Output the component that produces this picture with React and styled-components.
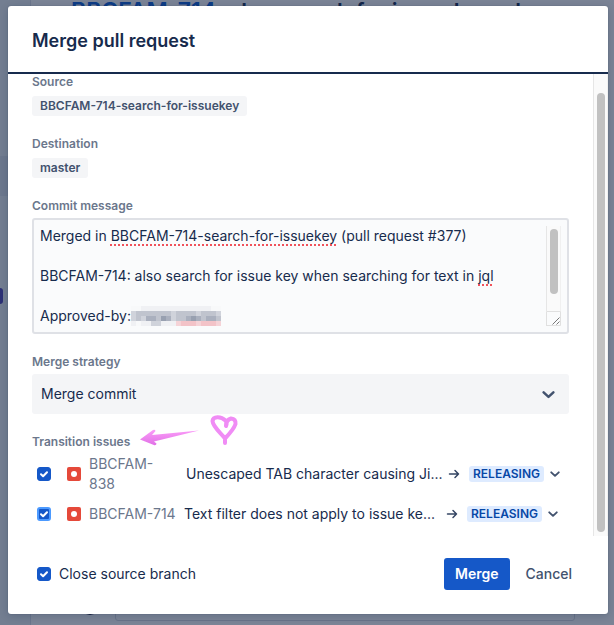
import React from 'react'
import styled, { createGlobalStyle } from 'styled-components';

const GlobalStyle = createGlobalStyle`
    * {
        box-sizing: border-box;
    }

    body {
        margin: 0;
        background: #737e91;
        color: #172b4d;
        font-family: Inter, Roboto, sans-serif;
        font-size: 14px;
        line-height: 20px;
    }

    button, textarea, select, input {
        font: inherit;
        color: inherit;
        margin: 0;
    }
`;

const Screen = styled.div`
    position: relative;
    display: flex;
    min-height: 100vh;
    padding: 6px 6px 11px 8px;
    overflow: hidden;
`;

const Backdrop = styled.div`
    position: absolute;
    inset: 0;
    padding: 0 0 0 30px;
    overflow: hidden;
`;

const BackPanel = styled.div`
    height: 100%;
    padding-left: 40px;
    border-left: 1px solid #6b768c;
    background: #7b8496;
`;

const BackTitle = styled.div`
    font-size: 22px;
    font-weight: 600;
    line-height: 22px;
    white-space: nowrap;
    color: #12264a;

    span {
        font-size: 23px;
        color: #0d3c85;
    }
`;

const BackBox = styled.div`
    position: absolute;
    left: 115px;
    right: 39px;
    bottom: 4px;
    height: 40px;
    border: 1px solid #697489;
    border-radius: 3px;
`;

const BackAvatar = styled.div`
    position: absolute;
    left: 80px;
    bottom: 10px;
    width: 20px;
    height: 20px;
    border-radius: 50%;
    background: #17213f;
`;

const BackBand = styled.div`
    position: absolute;
    left: 0;
    top: 156px;
    width: 30px;
    height: 40px;
    background: #6c788d;
`;

const BackTab = styled.div`
    position: absolute;
    left: -3px;
    top: 288px;
    width: 6px;
    height: 16px;
    border-radius: 3px;
    background: #2b3075;
`;

const Dialog = styled.section`
    position: relative;
    flex: 1;
    min-width: 0;
    display: flex;
    flex-direction: column;
    border-radius: 3px;
    background: #fff;
    box-shadow: 0 0 1px rgba(9, 30, 66, 0.4), 0 2px 8px rgba(9, 30, 66, 0.2);
`;

const Header = styled.header`
    padding: 23px 24px 19px;
    border-bottom: 2px solid #172b4d;
`;

const Title = styled.h1`
    margin: 0;
    font-size: 18px;
    font-weight: 600;
    line-height: 24px;
`;

const Body = styled.div`
    flex: 1;
    display: flex;
`;

const Fields = styled.div`
    flex: 1;
    min-width: 0;
    display: flex;
    flex-direction: column;
    gap: 20px;
    padding: 0 24px 2px;
`;

const Field = styled.div`
    display: flex;
    flex-direction: column;
    align-items: stretch;
    gap: ${props => props.$gap || 4}px;
`;

const Label = styled.label`
    align-self: flex-start;
    font-size: 12px;
    font-weight: 600;
    line-height: 16px;
    color: #6b778c;
`;

const Tag = styled.span`
    align-self: flex-start;
    padding: 0 8px;
    border-radius: 3px;
    background: #f4f5f7;
    font-size: 12px;
    font-weight: 600;
    color: #42526e;
`;

const ScrollTrack = styled.div`
    width: 15px;
    padding: ${props => props.$pad};
    border-left: 1px solid #e6e6e6;
    border-right: 1px solid #f0f0f0;
    background: #fafafa;
`;

const ScrollThumb = styled.div`
    width: 8px;
    height: ${props => props.$height};
    margin: 0 auto;
    border-radius: 4px;
    background: #c1c1c1;
`;

const Editor = styled.div`
    position: relative;
    display: flex;
    padding: 6px;
    border: 2px solid #dfe1e6;
    border-radius: 3px;
    background: #fafbfc;
`;

const Message = styled.textarea`
    position: relative;
    flex: 1;
    min-width: 0;
    display: block;
    height: 100px;
    padding: 0;
    border: 0;
    outline: 0;
    background: transparent;
    resize: none;
    overflow: hidden;
`;

const SpellLayer = styled.div`
    position: absolute;
    inset: 6px 21px 6px 6px;
    overflow: hidden;
    white-space: pre-wrap;
    color: transparent;

    mark {
        background: none;
        color: transparent;
        text-decoration: underline dotted #f0525b 2px;
        text-underline-offset: 3px;
        text-decoration-skip-ink: none;
    }

    svg {
        vertical-align: top;
    }
`;

const EditorSide = styled.div`
    display: flex;
    flex-direction: column;

    svg {
        display: block;
    }
`;

const SelectBox = styled.div`
    display: grid;
    align-items: center;

    select, svg {
        grid-area: 1 / 1;
    }

    svg {
        justify-self: end;
        margin-right: 14px;
        pointer-events: none;
    }
`;

const Select = styled.select`
    width: 100%;
    height: 40px;
    padding: 0 40px 0 9px;
    border: 0;
    border-radius: 3px;
    background: #f4f5f7;
    appearance: none;
`;

const Issues = styled.ul`
    margin: 0;
    padding: 0;
    list-style: none;
`;

const Issue = styled.li`
    display: flex;
    align-items: center;
    height: 40px;
    padding: 0 ${props => props.$end}px 0 5px;
`;

const CheckBox = styled.span`
    display: grid;
    flex: none;

    input, svg {
        grid-area: 1 / 1;
    }

    input {
        width: 14px;
        height: 14px;
        border: ${props => (props.$focused ? '2px solid #4c9aff' : '1px solid #1558c8')};
        border-radius: 3px;
        background: #1558c8;
        appearance: none;
    }

    svg {
        pointer-events: none;
        visibility: hidden;
    }

    input:checked + svg {
        visibility: visible;
    }
`;

const IssueType = styled.svg`
    flex: none;
    margin: 0 8px 0 16px;
`;

const IssueKey = styled.a`
    flex: none;
    width: ${props => props.$width}px;
    padding-right: ${props => (props.$wrap ? 16 : 0)}px;
    margin-right: 8px;
    white-space: ${props => (props.$wrap ? 'normal' : 'nowrap')};
    color: #6b778c;
    text-decoration: none;
`;

const Summary = styled.span`
    flex: 1;
    min-width: 0;
    overflow: hidden;
    white-space: nowrap;
`;

const Status = styled.button`
    flex: none;
    display: flex;
    align-items: center;
    padding: 0;
    border: 0;
    background: none;
`;

const Lozenge = styled.span`
    margin: 0 6px 0 9px;
    padding: 0 4px;
    border-radius: 3px;
    background: #deebff;
    color: #0747a6;
    font-size: 12px;
    font-weight: 600;
    line-height: 16px;
`;

const Doodle = styled.svg`
    position: absolute;
    left: 130px;
    top: 406px;
    pointer-events: none;
`;

const Footer = styled.footer`
    display: flex;
    align-items: center;
    justify-content: space-between;
    padding: 22px 26px 24px 29px;
`;

const CloseBranch = styled.label`
    display: flex;
    align-items: center;
    gap: 8px;
`;

const Actions = styled.div`
    display: flex;
    gap: 6px;
`;

const Button = styled.button`
    height: 32px;
    padding: 0 ${props => (props.$primary ? 11 : 10)}px;
    border: 0;
    border-radius: 3px;
    background: ${props => (props.$primary ? '#1558c8' : 'transparent')};
    color: ${props => (props.$primary ? '#fff' : '#42526e')};
    font-weight: ${props => (props.$primary ? 600 : 500)};
`;

const message = `Merged in BBCFAM-714-search-for-issuekey (pull request #377)

BBCFAM-714: also search for issue key when searching for text in jql

Approved-by:
`;

const issues = [
    { key: 'BBCFAM-838', summary: 'Unescaped TAB character causing Ji...', keyWidth: 89, end: 9, wrap: true },
    { key: 'BBCFAM-714', summary: 'Text filter does not apply to issue ke...', keyWidth: 87, end: 11, focused: true },
];

// one string per row of blocks, each digit is a shade
const blocks = ['001111111111111100', '233333332333323332', '232443542334543443', '101122111566656665'];
const shades = ['#f8f9fa', '#f0f1f4', '#d0d3db', '#c0c4ce', '#aab0be', '#98a0b0', '#f3c3c8'];

const Chevron = ({ size = 12 }) => (
    <svg width={size} height={size} viewBox="0 0 12 12" fill="none" stroke="#42526e" strokeWidth="2.3" strokeLinecap="round" strokeLinejoin="round">
        <path d="M1.5 4 6 8.2 10.5 4" />
    </svg>
);

const Check = ({ focused, ...rest }) => (
    <CheckBox $focused={focused}>
        <input type="checkbox" defaultChecked {...rest} />
        <svg width="14" height="14" viewBox="0 0 14 14" fill="none" stroke="#fff" strokeWidth="2" strokeLinecap="round" strokeLinejoin="round">
            <path d="M4 7.2 6.1 9.2 10 5.2" />
        </svg>
    </CheckBox>
);

const Censored = () => (
    <svg width="90" height="20" viewBox="0 0 90 20" shapeRendering="crispEdges">
        {blocks.map((row, y) => row.split('').map((shade, x) => (
            <rect key={`${x}-${y}`} x={x * 5} y={y * 5} width="5" height="5" fill={y === 3 && shade === '5' ? '#f5d3d7' : shades[shade]} />
        )))}
    </svg>
);

export default class App extends React.Component {

    renderBackdrop = () => {
        return <Backdrop aria-hidden="true">
            <BackPanel>
                <BackTitle><span>BBCFAM-714</span>: also search for issue key when</BackTitle>
            </BackPanel>
            <BackBand />
            <BackTab />
            <BackAvatar />
            <BackBox />
        </Backdrop>
    };

    renderIssue = (issue) => {
        return <Issue key={issue.key} $end={issue.end}>
            <Check focused={issue.focused} aria-label={issue.key} />
            <IssueType width="14" height="14" viewBox="0 0 14 14">
                <rect width="14" height="14" rx="2" fill="#e5493a" />
                <circle cx="7" cy="7" r="3" fill="#fff" />
            </IssueType>
            <IssueKey href="#" $width={issue.keyWidth} $wrap={issue.wrap}>{issue.key}</IssueKey>
            <Summary>{issue.summary}</Summary>
            <Status type="button">
                <svg width="12" height="12" viewBox="0 0 12 12" fill="none" stroke="#344563" strokeWidth="1.5" strokeLinecap="round" strokeLinejoin="round">
                    <path d="M1.5 6H10.5M7 2.5 10.5 6 7 9.5" />
                </svg>
                <Lozenge>RELEASING</Lozenge>
                <Chevron size={10} />
            </Status>
        </Issue>
    };

    render() {
        return (
            <Screen>
                <GlobalStyle />
                {this.renderBackdrop()}
                <Dialog role="dialog" aria-labelledby="title">
                    <Header>
                        <Title id="title">Merge pull request</Title>
                    </Header>
                    <Body>
                        <Fields>
                            <Field $gap={6}>
                                <Label as="span">Source</Label>
                                <Tag>BBCFAM-714-search-for-issuekey</Tag>
                            </Field>
                            <Field $gap={6}>
                                <Label as="span">Destination</Label>
                                <Tag>master</Tag>
                            </Field>
                            <Field>
                                <Label htmlFor="message">Commit message</Label>
                                <Editor>
                                    <SpellLayer aria-hidden="true">
                                        Merged in <mark>BBCFAM-714-search-for-issuekey</mark>{' (pull request #377)\n\n'}
                                        {'BBCFAM-714: also search for issue key when searching for text in '}<mark>jql</mark>{'\n\n'}
                                        Approved-by:<Censored />
                                    </SpellLayer>
                                    <Message id="message" spellCheck={false} defaultValue={message} />
                                    <EditorSide>
                                        <ScrollTrack $pad="3px 0 17px">
                                            <ScrollThumb $height="65px" />
                                        </ScrollTrack>
                                        <svg width="15" height="15" viewBox="0 0 15 15" fill="none">
                                            <path d="M.5 15V.5H14.5V14.5H.5" stroke="#e0e0e0" />
                                            <path d="M6.5 13.5 13.5 6.5M10.5 13.5 13.5 10.5" stroke="#777" />
                                        </svg>
                                    </EditorSide>
                                </Editor>
                            </Field>
                            <Field>
                                <Label htmlFor="strategy">Merge strategy</Label>
                                <SelectBox>
                                    <Select id="strategy">
                                        <option>Merge commit</option>
                                    </Select>
                                    <Chevron size={13} />
                                </SelectBox>
                            </Field>
                            <Field>
                                <Label as="span">Transition issues</Label>
                                <Issues>{issues.map(this.renderIssue)}</Issues>
                            </Field>
                        </Fields>
                        <ScrollTrack $pad="19px 0 4px">
                            <ScrollThumb $height="100%" />
                        </ScrollTrack>
                    </Body>
                    <Footer>
                        <CloseBranch>
                            <Check />
                            Close source branch
                        </CloseBranch>
                        <Actions>
                            <Button type="button" $primary>Merge</Button>
                            <Button type="button">Cancel</Button>
                        </Actions>
                    </Footer>
                    <Doodle width="104" height="36" viewBox="0 0 104 36" fill="none">
                        <defs>
                            <linearGradient id="pink" x1="0" y1="0" x2="0" y2="1">
                                <stop offset="0" stopColor="#fb9cf8" />
                                <stop offset="1" stopColor="#e070e6" />
                            </linearGradient>
                        </defs>
                        <path d="M2 27.5 15 18q2-1 2.500 1L14 23 61 18.500 16 29.500 18.500 31.500q0 2-2 1.800Z" fill="url(#pink)" />
                        <path d="M87 31V26.500C83 21 75 15 74.500 9 75 4 83 4 87.500 8.500Q89.500 11 88 14 88 8 93 6.500 98 7 97.500 12 96 17 87 26.500" stroke="#f08cf5" strokeWidth="4" strokeLinecap="round" strokeLinejoin="round" />
                    </Doodle>
                </Dialog>
            </Screen>
        );
    }

}
